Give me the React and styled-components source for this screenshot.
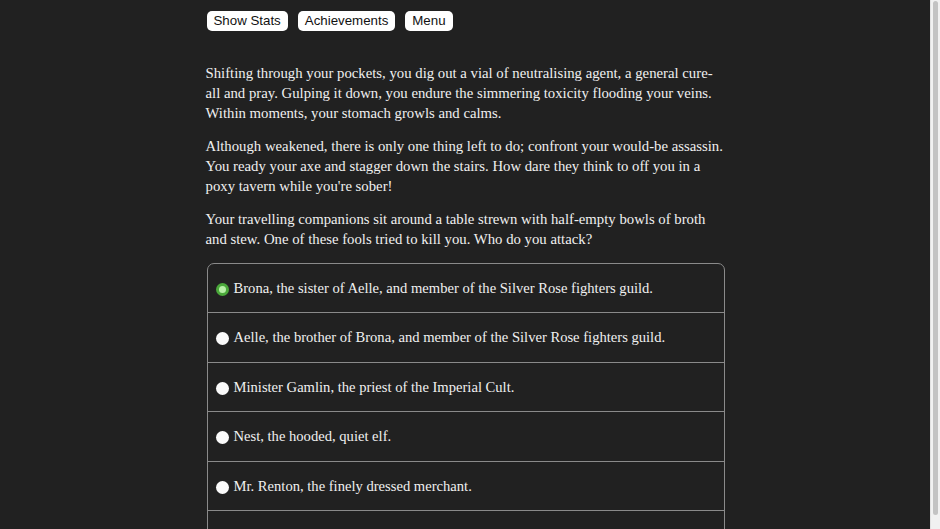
import React, { useState } from 'react'
import styled, { createGlobalStyle } from 'styled-components'

const GlobalStyle = createGlobalStyle`
  html, body {
    margin: 0;
    background: #212121;
  }
  body {
    font-family: "Liberation Serif", serif;
  }
`

const options = [
  'Brona, the sister of Aelle, and member of the Silver Rose fighters guild.',
  'Aelle, the brother of Brona, and member of the Silver Rose fighters guild.',
  'Minister Gamlin, the priest of the Imperial Cult.',
  'Nest, the hooded, quiet elf.',
  'Mr. Renton, the finely dressed merchant.',
  'Vildrake Bahnar, the burly travelling smith.',
]

const App = () => {
  const [choice, setChoice] = useState(0)

  return (
    <Page>
      <GlobalStyle />
      <Column>
        <Toolbar>
          <TopButton>Show Stats</TopButton>
          <TopButton>Achievements</TopButton>
          <TopButton>Menu</TopButton>
        </Toolbar>

        <Story>
          <Para>
            Shifting through your pockets, you dig out a vial of neutralising agent, a general cure-all and pray. Gulping it down, you endure the simmering toxicity flooding your veins. Within moments, your stomach growls and calms.
          </Para>
          <Para>
            Although weakened, there is only one thing left to do; confront your would-be assassin. You ready your axe and stagger down the stairs. How dare they think to off you in a poxy tavern while you're sober!
          </Para>
          <Para>
            Your travelling companions sit around a table strewn with half-empty bowls of broth and stew. One of these fools tried to kill you. Who do you attack?
          </Para>
        </Story>

        <Choices>
          {options.map((text, i) => (
            <Choice key={i} onClick={() => setChoice(i)}>
              <Radio selected={choice === i} />
              <ChoiceText>{text}</ChoiceText>
            </Choice>
          ))}
        </Choices>
      </Column>

      <ScrollTrack>
        <ScrollThumb />
      </ScrollTrack>
    </Page>
  )
}

export default App

const Page = styled.div`
  min-height: 100vh;
  padding-right: 10px;
  color: #f2f2f2;
`

const Column = styled.main`
  width: 519px;
  margin: 0 auto;
  padding: 11px 0 30px;
`

const Toolbar = styled.div`
  display: flex;
  gap: 10px;
  padding-left: 1px;
`

const TopButton = styled.button`
  font-family: "Liberation Sans", Arial, sans-serif;
  font-size: 13.3px;
  color: #111;
  background: #fff;
  border: none;
  border-radius: 5px;
  height: 20px;
  padding: 0 7px;
  line-height: 20px;
  cursor: pointer;
`

const Story = styled.div`
  margin-top: 32px;
`

const Para = styled.p`
  margin: 0 0 13px;
  font-size: 14.75px;
  line-height: 20px;
  color: #f0f0f0;
`

const Choices = styled.div`
  margin: 14px 0 0 1px;
  border: 1px solid #8a8a8a;
  border-radius: 7px;
  overflow: hidden;
`

const Choice = styled.label`
  display: flex;
  align-items: center;
  gap: 5px;
  height: 48.5px;
  padding: 0 8px;
  border-top: 1px solid #8a8a8a;
  cursor: pointer;

  &:first-child {
    height: 48px;
    border-top: none;
  }
`

const Radio = styled.span`
  flex: none;
  width: 13px;
  height: 13px;
  margin-top: 3px;
  border-radius: 50%;
  box-sizing: border-box;
  background: ${p => (p.selected ? '#b8f0a8' : '#fafafa')};
  border: ${p => (p.selected ? '3.5px solid #4aa83a' : 'none')};
`

const ChoiceText = styled.span`
  font-size: 14.6px;
  line-height: 20px;
  color: #f0f0f0;
`

const ScrollTrack = styled.div`
  position: fixed;
  top: 0;
  right: 0;
  bottom: 0;
  width: 10px;
  box-sizing: border-box;
  background: #f1f1f1;
  border-left: 1px solid #e2e2e2;
  padding: 1px 2px 14px 2px;
`

const ScrollThumb = styled.div`
  height: 100%;
  background: #c3c3c3;
  border-radius: 3px;
`
